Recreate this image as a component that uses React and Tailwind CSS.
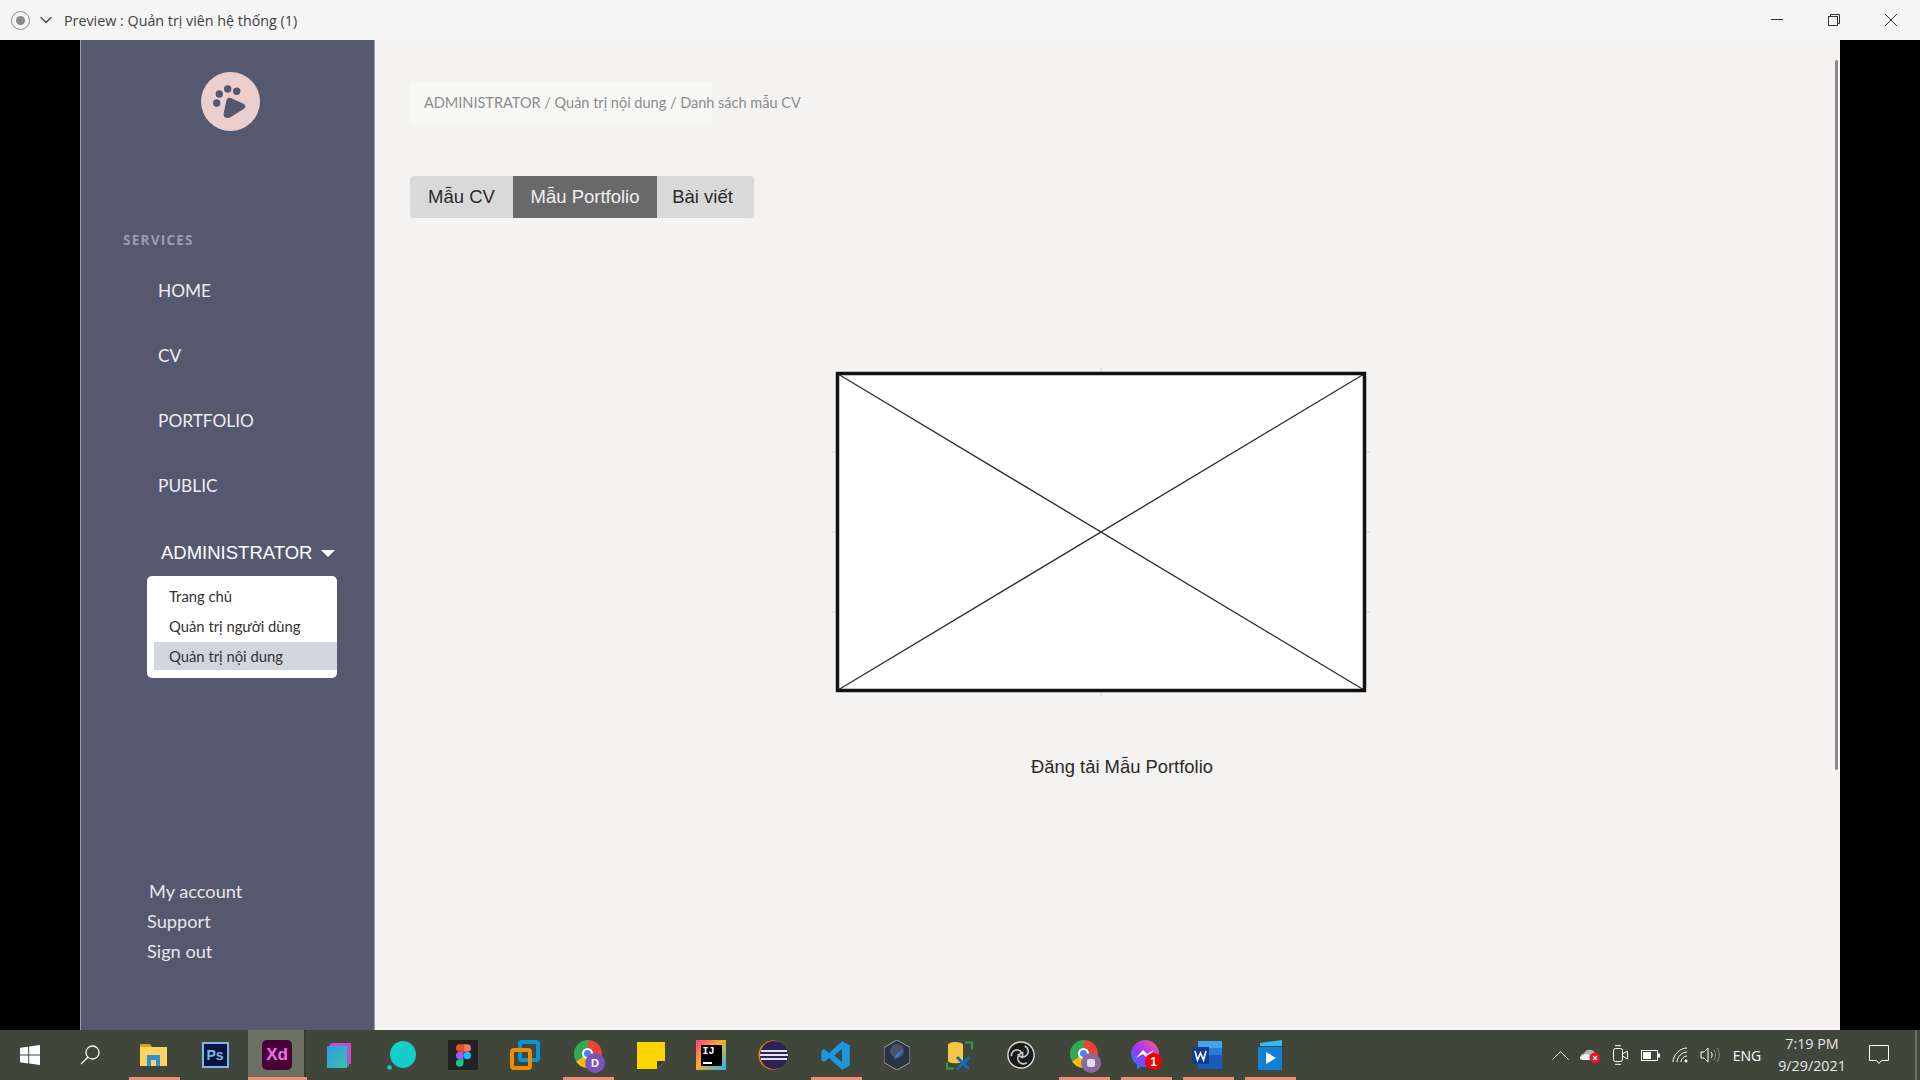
import React from 'react';
import { ChevronDown } from 'lucide-react';

const navItems = ['HOME', 'CV', 'PORTFOLIO', 'PUBLIC'];

const Paw = () => (
    <svg viewBox="0 0 59 59" className="h-[59px] w-[59px]">
        <circle cx="29.500" cy="29.500" r="29.500" fill="#eccfcc" />
        <g fill="#55586f">
            <circle cx="15.700" cy="31" r="3.700" />
            <circle cx="18.300" cy="22" r="3.700" />
            <circle cx="26.700" cy="17" r="3.700" />
            <circle cx="35.700" cy="19.300" r="3.700" />
            <path d="M25.500 28 C27 25 29 25.500 32 27 L42 31.500 C45 33 45 35.500 42.500 37 L30 45 C26.500 47 22.500 46 22.500 42 Z" />
        </g>
    </svg>
);

const Sidebar = () => (
    <aside className="relative w-[295px] shrink-0 border-x border-[#9a9cb3] bg-[#55586f] font-['Open_Sans',sans-serif] text-white">
        <div className="flex justify-center pl-[6px] pt-[32px]">
            <Paw />
        </div>
        <div className="pl-[42px] pt-[100px] text-[13.6px] font-bold leading-[18px] tracking-[1.2px] text-[#9a9cb0]">SERVICES</div>
        <nav className="flex flex-col gap-[37px] pl-[77px] pt-[28px] font-['Lato',sans-serif] text-[17.3px] leading-[28px] text-[#eeeef2]">
            {navItems.map((item) => (
                <a key={item}>{item}</a>
            ))}
        </nav>
        <div className="flex items-center gap-[9px] pl-[80px] pt-[40px] font-['Liberation_Sans',sans-serif] text-[18.5px] leading-[26px]">
            <span>ADMINISTRATOR</span>
            <span className="h-0 w-0 border-x-[7px] border-t-[7px] border-x-transparent border-t-white" />
        </div>
        <div className="ml-[66px] mt-[10px] w-[190px] rounded-[5px] bg-white pb-[8px] pl-[7px] pt-[7px] font-['Lato',sans-serif] text-[14.8px] text-[#333]">
            <div className="h-[30px] pl-[15px] leading-[26px]">Trang chủ</div>
            <div className="h-[29px] pl-[15px] leading-[26px]">Quản trị người dùng</div>
            <div className="h-[28px] bg-[#d1d6dc] pl-[15px] leading-[28px]">Quản trị nội dung</div>
        </div>
        <div className="absolute left-[66px] top-[836px] flex flex-col font-['Lato',sans-serif] text-[18.2px] leading-[30px] text-[#e6e6ea]">
            <span className="pl-[2px]">My account</span>
            <span>Support</span>
            <span>Sign out</span>
        </div>
    </aside>
);

const Placeholder = () => (
    <svg viewBox="0 0 530 320" className="h-[320px] w-[530px] overflow-visible bg-white" preserveAspectRatio="none">
        <path d="M265 -4V0M265 320v4M-4 80h4M-4 160h4M-4 240h4M530 80h4M530 160h4M530 240h4" stroke="#d4d4d4" fill="none" />
        <path d="M2 2 L528 318 M528 2 L2 318" stroke="#333" strokeWidth="1.400" fill="none" />
        <rect x="1.500" y="1.500" width="527" height="317" stroke="#111" strokeWidth="3.500" fill="none" />
    </svg>
);

const Content = () => (
    <main className="relative flex-1 bg-[#f4f3f2] font-['Liberation_Sans',sans-serif]">
        <div className="pl-[35px] pt-[42px]">
            <div className="flex h-[43px] w-[302px] items-center whitespace-nowrap rounded-[4px] bg-[#f7f7f6] pb-[2px] pl-[14px] font-['Lato',sans-serif] text-[14.5px] text-[#8c8c8c]">
                ADMINISTRATOR / Quản trị nội dung / Danh sách mẫu CV
            </div>
        </div>
        <div className="ml-[35px] mt-[51px] flex h-[42px] w-fit overflow-hidden rounded-[4px] text-[18.5px] text-[#2a2a2a]">
            <button className="w-[103px] bg-[#d9d9d9]">Mẫu CV</button>
            <button className="w-[144px] bg-[#696969] text-[#f0f0f0]">Mẫu Portfolio</button>
            <button className="w-[97px] bg-[#d9d9d9] pr-[6px]">Bài viết</button>
        </div>
        <div className="ml-[461px] mt-[154px]">
            <Placeholder />
        </div>
        <div className="ml-[656px] mt-[63px] text-[18.4px] leading-[24px] text-[#2a2a2a]">Đăng tải Mẫu Portfolio</div>
        <div className="absolute right-[2px] top-[20px] h-[710px] w-[3px] rounded-full bg-[#8a8a8a]" />
    </main>
);

const TitleBar = () => (
    <header className="flex h-[40px] items-center bg-[#f5f5f5] font-['Open_Sans',sans-serif] text-[14.3px] text-[#404040]">
        <div className="ml-[11px] flex h-[19px] w-[19px] items-center justify-center rounded-full border border-[#8a8a8a]">
            <div className="h-[9px] w-[9px] rounded-full bg-[#8a8a8a]" />
        </div>
        <ChevronDown className="ml-[6px] h-[20px] w-[20px] text-[#444]" strokeWidth={1.600} />
        <span className="ml-[8px] pt-[1px]">Preview : Quản trị viên hệ thống (1)</span>
        <div className="ml-auto flex items-center gap-[45px] pr-[23px] text-[#333]">
            <svg viewBox="0 0 12 12" className="h-[12px] w-[12px]" fill="none" stroke="currentColor">
                <path d="M0 5.500H12" />
            </svg>
            <svg viewBox="0 0 12 12" className="h-[12px] w-[12px]" fill="none" stroke="currentColor">
                <path d="M2.500 2.500 V0.500 H11.500 V9.500 H9.500" />
                <rect x="0.500" y="2.500" width="9" height="9" />
            </svg>
            <svg viewBox="0 0 12 12" className="h-[12px] w-[12px]" fill="none" stroke="currentColor">
                <path d="M0 0L12 12M12 0L0 12" />
            </svg>
        </div>
    </header>
);

const TaskIcon = ({ children, active, open }) => (
    <div className="relative flex h-[50px] w-[62px] shrink-0 items-center justify-center">
        {active && <div className="absolute bottom-0 left-[2px] top-0 w-[56px] bg-[#6b7063]" />}
        {active && <div className="absolute bottom-0 left-[58px] top-0 w-[2px] bg-[#35392f]" />}
        <div className="relative flex items-center justify-center">{children}</div>
        {open && <div className={`absolute bottom-0 h-[3px] bg-[#f28b70] ${active ? 'left-[2px] right-[1px]' : 'left-[7px] right-[4px]'}`} />}
    </div>
);

const chromeBase = (
    <>
        <div className="h-[28px] w-[28px] rounded-full bg-[conic-gradient(#ea4335_0_33%,#fbbc05_33%_66%,#34a853_66%)]" />
        <div className="absolute left-[8px] top-[8px] h-[11px] w-[11px] rounded-full border-2 border-white bg-[#4285f4]" />
    </>
);

const icons = {
    explorer: (
        <svg viewBox="0 0 27 22" className="h-[22px] w-[27px]">
            <path d="M0 0h10l2 3H0z" fill="#d9a020" />
            <rect x="0" y="3" width="27" height="19" fill="#fcd462" />
            <path d="M7 11h13v11h-4v-6h-5v6H7z" fill="#2e8fd6" />
        </svg>
    ),
    ps: (
        <div className="flex h-[26px] w-[27px] items-center justify-center border-2 border-[#7fb6e8] bg-[#0b1440] font-['Liberation_Sans',sans-serif] text-[14px] font-bold text-[#7fb6e8]">Ps</div>
    ),
    xd: (
        <div className="flex h-[30px] w-[30px] items-center justify-center rounded-[5px] bg-[#470137] font-['Liberation_Sans',sans-serif] text-[17px] font-bold text-[#ef6ff0]">Xd</div>
    ),
    cards: (
        <svg viewBox="0 0 24 25" className="h-[25px] w-[24px]">
            <defs>
                <linearGradient id="cardFill" x1="0" y1="0" x2="1" y2="1">
                    <stop offset="0" stopColor="#2f9ae8" />
                    <stop offset="1" stopColor="#3cc0a8" />
                </linearGradient>
            </defs>
            <rect x="4" y="0" width="20" height="21" fill="#e040c0" />
            <rect x="2" y="1.500" width="20" height="22" fill="#9060e0" />
            <rect x="0" y="3" width="20" height="22" fill="url(#cardFill)" />
        </svg>
    ),
    teal: (
        <svg viewBox="0 0 29 29" className="h-[29px] w-[29px]">
            <ellipse cx="16" cy="13.500" rx="13" ry="13.500" fill="#12cdc8" />
            <circle cx="2.500" cy="26.500" r="2.300" fill="#12cdc8" />
        </svg>
    ),
    figma: (
        <div className="flex h-[30px] w-[30px] items-center justify-center bg-[#222]">
            <svg viewBox="0 0 12 18" className="h-[23px] w-[15px]">
                <path d="M3 0h3v6H3a3 3 0 010-6z" fill="#f24e1e" />
                <path d="M6 0h3a3 3 0 010 6H6z" fill="#ff7262" />
                <path d="M3 6h3v6H3a3 3 0 010-6z" fill="#a259ff" />
                <circle cx="9" cy="9" r="3" fill="#1abcfe" />
                <path d="M3 12h3v3a3 3 0 11-3-3z" fill="#0acf83" />
            </svg>
        </div>
    ),
    boxes: (
        <svg viewBox="0 0 30 30" className="h-[30px] w-[30px]" fill="none" strokeWidth="4">
            <rect x="10" y="2" width="18" height="18" rx="2" stroke="#0a94d6" />
            <rect x="2" y="10" width="18" height="18" rx="2" stroke="#f08c00" />
        </svg>
    ),
    notes: (
        <svg viewBox="0 0 28 27" className="ml-[3px] h-[27px] w-[28px]">
            <path d="M0 0h28v19L20 27H0z" fill="#ffd500" />
            <path d="M28 19L20 27V19z" fill="#3a3a3a" />
        </svg>
    ),
    idea: (
        <div className="flex h-[30px] w-[30px] items-center justify-center bg-[linear-gradient(135deg,#ff3d8b,#ffb020_45%,#18b8f0)]">
            <div className="flex h-[21px] w-[21px] flex-col justify-between bg-black p-[2px] font-['Liberation_Mono',monospace] text-[10px] font-bold leading-[10px] text-white">
                <span>IJ</span>
                <span className="h-[1.500px] w-[9px] bg-white" />
            </div>
        </div>
    ),
    eclipse: (
        <svg viewBox="0 0 30 30" className="h-[30px] w-[30px]">
            <circle cx="15" cy="15" r="14.500" fill="#f08c00" />
            <circle cx="16" cy="15" r="14" fill="#2c2255" />
            <path d="M3 11h26M2 15h28M3 19h26" stroke="#e6e0f5" strokeWidth="2" />
        </svg>
    ),
    vscode: (
        <svg viewBox="0 0 24 24" className="h-[31px] w-[31px]">
            <path d="M17 1l6 3v16l-6 3L7 14l-4 3-2-1.500v-7L3 7l4 3z" fill="#1a97e0" />
            <path d="M17 7l-6 5 6 5z" fill="#41463a" />
        </svg>
    ),
    compass: (
        <svg viewBox="0 0 26 30" className="h-[30px] w-[26px]">
            <path d="M13 0l13 7.500v15L13 30 0 22.500v-15z" fill="#2b3242" stroke="#9aa0aa" />
            <circle cx="13" cy="11" r="7" fill="#4a5366" />
            <path d="M19 9l-7 6-2 5 6-5z" fill="#2f7de0" />
        </svg>
    ),
    tools: (
        <svg viewBox="0 0 27 29" className="h-[29px] w-[27px]" fill="none">
            <path d="M2 4c0-4 15-4 15 0v16c0 3-15 3-15 0z" fill="#f5c842" />
            <path d="M19 1.500h7v7M8 27.500H1v-6" stroke="#2f9e44" strokeWidth="2" />
            <path d="M11 16l12 12M24 16L11 28" stroke="#0a6fc0" strokeWidth="3" />
        </svg>
    ),
    obs: (
        <svg viewBox="0 0 30 30" className="h-[28px] w-[28px]" fill="none">
            <circle cx="15" cy="15" r="14" fill="#1a1a1a" stroke="#ddd" strokeWidth="1.500" />
            <g stroke="#c8c8c8" strokeWidth="1.800">
                <path d="M19 5.500A6 6 0 1 1 11.500 14" />
                <path d="M19 5.500A6 6 0 1 1 11.500 14" transform="rotate(120 15 15)" />
                <path d="M19 5.500A6 6 0 1 1 11.500 14" transform="rotate(240 15 15)" />
            </g>
        </svg>
    ),
    chromeD: (
        <div className="relative ml-[4px] h-[30px] w-[30px]">
            {chromeBase}
            <div className="absolute left-[11px] top-[13px] flex h-[20px] w-[20px] items-center justify-center rounded-full bg-[#7a55b8] font-['Liberation_Sans',sans-serif] text-[11px] font-bold text-white">D</div>
        </div>
    ),
    chromeP: (
        <div className="relative ml-[4px] h-[30px] w-[30px]">
            {chromeBase}
            <div className="absolute left-[11px] top-[13px] h-[20px] w-[20px] rounded-full bg-[#8a6a9a]" />
            <div className="absolute left-[17px] top-[19px] h-[8px] w-[8px] rounded-[2px] bg-[#e5dce8]" />
        </div>
    ),
    messenger: (
        <div className="relative ml-[2px] h-[30px] w-[30px]">
            <svg viewBox="0 0 28 30" className="h-[30px] w-[28px]">
                <defs>
                    <linearGradient id="msgFill" x1="1" y1="0" x2="0" y2="1">
                        <stop offset="0" stopColor="#ff5c87" />
                        <stop offset="0.55" stopColor="#a033ff" />
                        <stop offset="1" stopColor="#0a8cff" />
                    </linearGradient>
                </defs>
                <path d="M14 0a14 13.500 0 0 1 0 27q-2 0-4-.5L6 29.500V24.500A14 13.500 0 0 1 14 0z" fill="url(#msgFill)" />
                <path d="M5 18l7-8 4 4 7-4-7 8-4-4z" fill="#fff" />
            </svg>
            <div className="absolute left-[14px] top-[13px] flex h-[17px] w-[17px] items-center justify-center rounded-full bg-[#f00000] font-['Liberation_Sans',sans-serif] text-[12px] font-bold text-white">1</div>
        </div>
    ),
    word: (
        <svg viewBox="0 0 30 30" className="h-[30px] w-[30px]">
            <rect x="6" y="1" width="24" height="28" fill="#185abd" />
            <rect x="6" y="1" width="24" height="7" fill="#41a5ee" />
            <rect x="6" y="8" width="24" height="7" fill="#2b7cd3" />
            <rect x="0" y="7" width="17" height="17" fill="#103f91" />
            <path d="M3 11l2.500 9 3-7 3 7L14 11" stroke="#fff" strokeWidth="1.600" fill="none" />
        </svg>
    ),
    player: (
        <svg viewBox="0 0 26 30" className="ml-[2px] h-[30px] w-[26px]">
            <path d="M3 3l22-3v6H3z" fill="#32bdf0" />
            <rect x="1" y="7" width="24" height="23" fill="#0f80d6" />
            <path d="M9 12l10 6-10 6z" fill="#fff" />
        </svg>
    ),
};

const TrayCell = ({ w, children }) => (
    <div className="flex h-[50px] items-center justify-center" style={{ width: w }}>
        {children}
    </div>
);

const Taskbar = () => (
    <footer className="flex h-[50px] items-center bg-[#41463a] font-['Open_Sans',sans-serif] text-white">
        <div className="flex items-center">
            <div className="flex h-[50px] w-[59px] items-center justify-center">
                <svg viewBox="0 0 20 20" className="h-[20px] w-[20px]" fill="#fff">
                    <path d="M0 2.800l8.200-1.100v7.900H0zM9.200 1.500L20 0v9.600H9.200zM0 10.500h8.200v7.900L0 17.200zM9.200 10.500H20V20L9.200 18.500z" />
                </svg>
            </div>
            <div className="mr-[2px] flex h-[50px] w-[61px] items-center justify-center">
                <svg viewBox="0 0 20 20" className="h-[20px] w-[20px]" fill="none" stroke="#fff" strokeWidth="1.300">
                    <circle cx="12.500" cy="7.500" r="6.500" />
                    <path d="M7.800 12.200L1 19" />
                </svg>
            </div>
            <TaskIcon open>{icons.explorer}</TaskIcon>
            <TaskIcon>{icons.ps}</TaskIcon>
            <TaskIcon active open>{icons.xd}</TaskIcon>
            <TaskIcon>{icons.cards}</TaskIcon>
            <TaskIcon>{icons.teal}</TaskIcon>
            <TaskIcon>{icons.figma}</TaskIcon>
            <TaskIcon>{icons.boxes}</TaskIcon>
            <TaskIcon open>{icons.chromeD}</TaskIcon>
            <TaskIcon>{icons.notes}</TaskIcon>
            <TaskIcon>{icons.idea}</TaskIcon>
            <TaskIcon>{icons.eclipse}</TaskIcon>
            <TaskIcon open>{icons.vscode}</TaskIcon>
            <TaskIcon>{icons.compass}</TaskIcon>
            <TaskIcon>{icons.tools}</TaskIcon>
            <TaskIcon>{icons.obs}</TaskIcon>
            <TaskIcon open>{icons.chromeP}</TaskIcon>
            <TaskIcon open>{icons.messenger}</TaskIcon>
            <TaskIcon open>{icons.word}</TaskIcon>
            <TaskIcon open>{icons.player}</TaskIcon>
        </div>
        <div className="ml-auto flex items-center text-[14px]">
            <TrayCell w={30}>
                <svg viewBox="0 0 17 9" className="h-[9px] w-[17px]" fill="none" stroke="#fff">
                    <path d="M0.500 8.500L8.500 0.700L16.500 8.500" />
                </svg>
            </TrayCell>
            <TrayCell w={30}>
                <svg viewBox="0 0 21 17" className="h-[17px] w-[21px]">
                    <path d="M2 12a3 3 0 0 1 2-5.500A6 6 0 0 1 15 6a4 4 0 0 1 1 6z" fill="#b4b6ae" />
                    <path d="M0 12a3 3 0 0 1 3-3.500A4 4 0 0 1 10 9a2 2 0 0 1 0 4H2z" fill="#f0f0f0" />
                    <circle cx="15" cy="11" r="5.500" fill="#e81123" />
                    <path d="M13 9l4 4M17 9l-4 4" stroke="#fff" strokeWidth="1.200" />
                </svg>
            </TrayCell>
            <TrayCell w={31}>
                <svg viewBox="0 0 15 20" className="h-[20px] w-[15px]" fill="none" stroke="#fff">
                    <rect x="0.500" y="3.500" width="9" height="13" rx="2" />
                    <path d="M9.500 9l5-3v8l-5-3M2 0.700h6M2 19.300h6" />
                </svg>
            </TrayCell>
            <TrayCell w={29}>
                <svg viewBox="0 0 19 11" className="h-[11px] w-[19px]">
                    <rect x="0.500" y="0.500" width="16" height="10" fill="none" stroke="#fff" />
                    <rect x="2" y="2" width="8" height="7" fill="#fff" />
                    <rect x="17" y="3.500" width="2" height="4" fill="#fff" />
                </svg>
            </TrayCell>
            <TrayCell w={30}>
                <svg viewBox="0 0 16 16" className="h-[16px] w-[16px]" fill="none" stroke="#fff">
                    <path d="M1 15C1 8 8 1 15 1M5 15c0-5 5-10 10-10M9 15c0-3 3-6 6-6" />
                    <circle cx="14" cy="14" r="1.500" fill="#fff" stroke="none" />
                </svg>
            </TrayCell>
            <TrayCell w={30}>
                <svg viewBox="0 0 20 16" className="h-[16px] w-[20px]" fill="none" stroke="#fff">
                    <path d="M1 5h3l4-4v14l-4-4H1z" />
                    <path d="M11 5c1.500 2 1.500 4 0 6" />
                    <path d="M14 3c2 3 2 7 0 10M17 1c3 4 3 10 0 14" stroke="#8c8f85" />
                </svg>
            </TrayCell>
            <TrayCell w={44}>
                <span>ENG</span>
            </TrayCell>
            <div className="flex w-[86px] flex-col items-center text-[14.3px] leading-[22px] text-[#e8e8e8]">
                <span>7:19 PM</span>
                <span>9/29/2021</span>
            </div>
            <TrayCell w={48}>
                <svg viewBox="0 0 20 20" className="h-[20px] w-[20px]" fill="none" stroke="#fff">
                    <path d="M0.500 0.500h19v15h-7l-2.500 3-2.500-3h-7z" />
                </svg>
            </TrayCell>
            <div className="ml-[12px] mr-[3px] h-[50px] w-[2px] bg-[#6b7063]" />
        </div>
    </footer>
);

export default function App() {
    return (
        <div className="flex h-[1080px] w-[1920px] flex-col overflow-hidden bg-black">
            <TitleBar />
            <div className="flex h-[990px] px-[80px]">
                <Sidebar />
                <Content />
            </div>
            <Taskbar />
        </div>
    );
}
